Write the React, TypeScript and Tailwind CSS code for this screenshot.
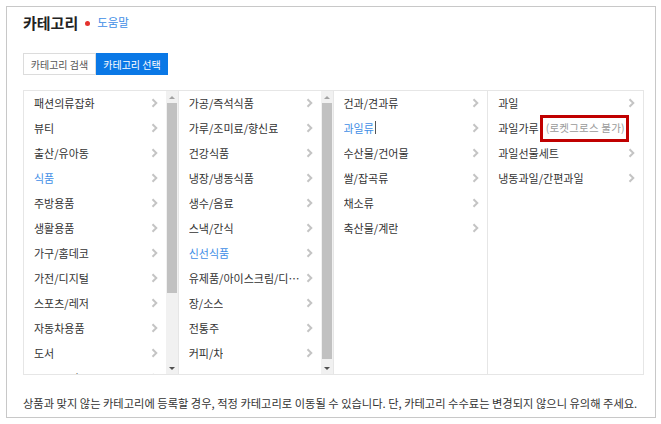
import React from 'react';

const font = { fontFamily: '"Noto Sans CJK KR", "Noto Sans", sans-serif' };

interface Item {
  label: string;
  active?: boolean;
  note?: string;
  cursor?: boolean;
}

const col1: Item[] = [
  { label: '패션의류잡화' },
  { label: '뷰티' },
  { label: '출산/유아동' },
  { label: '식품', active: true },
  { label: '주방용품' },
  { label: '생활용품' },
  { label: '가구/홈데코' },
  { label: '가전/디지털' },
  { label: '스포츠/레저' },
  { label: '자동차용품' },
  { label: '도서' },
  { label: '문구/오피스' },
];

const col2: Item[] = [
  { label: '가공/즉석식품' },
  { label: '가루/조미료/향신료' },
  { label: '건강식품' },
  { label: '냉장/냉동식품' },
  { label: '생수/음료' },
  { label: '스낵/간식' },
  { label: '신선식품', active: true },
  { label: '유제품/아이스크림/디저트' },
  { label: '장/소스' },
  { label: '전통주' },
  { label: '커피/차' },
];

const col3: Item[] = [
  { label: '건과/견과류' },
  { label: '과일류', active: true, cursor: true },
  { label: '수산물/건어물' },
  { label: '쌀/잡곡류' },
  { label: '채소류' },
  { label: '축산물/계란' },
];

const col4: Item[] = [
  { label: '과일' },
  { label: '과일가루', note: '(로켓그로스 불가)' },
  { label: '과일선물세트' },
  { label: '냉동과일/간편과일' },
];

function Chevron(): React.ReactElement {
  return (
    <svg width="7" height="10" viewBox="0 0 7 10" className="shrink-0">
      <polyline points="1.5,1.2 5.3,5 1.5,8.8" fill="none" stroke="#c4c4c4" strokeWidth="2" />
    </svg>
  );
}

function Row({ item }: { item: Item }): React.ReactElement {
  return (
    <div className="flex h-[25px] shrink-0 items-center justify-between pl-[10px] pr-[8px]">
      <span
        className={`flex min-w-0 items-center text-[11px] leading-[14px] ${item.active ? 'text-[#3f8ee6]' : 'text-[#333333]'}`}
      >
        <span className="truncate">{item.label}</span>
        {item.cursor && <span className="ml-[1px] h-[13px] w-[1px] bg-[#555]" />}
        {item.note && (
          <span className="relative ml-[7px] whitespace-nowrap text-[10.5px] tracking-[0.2px] text-[#9a9a9a]">
            {item.note}
            <span className="absolute -bottom-[7px] -left-[6px] -right-[4px] -top-[6px] border-[3px] border-[#c00000]" />
          </span>
        )}
      </span>
      {!item.note && <Chevron />}
    </div>
  );
}

function ScrollBar({ thumb }: { thumb: number }): React.ReactElement {
  return (
    <div className="flex w-[12px] shrink-0 flex-col bg-[#f1f1f1]">
      <div className="flex h-[12px] items-center justify-center">
        <div className="h-0 w-0 border-x-[3px] border-b-[3px] border-x-transparent border-b-[#a3a3a3]" />
      </div>
      <div className="flex-1 px-[1px]">
        <div className="w-full bg-[#c1c1c1]" style={{ height: thumb }} />
      </div>
      <div className="flex h-[12px] items-center justify-center">
        <div className="h-0 w-0 border-x-[3px] border-t-[3px] border-x-transparent border-t-[#505050]" />
      </div>
    </div>
  );
}

function Column({ items, thumb, last }: { items: Item[]; thumb?: number; last?: boolean }): React.ReactElement {
  return (
    <div className={`flex min-w-0 overflow-hidden ${last ? '' : 'border-r border-[#e6e6e6]'}`}>
      <div className="-mt-[1px] flex min-w-0 flex-1 flex-col overflow-hidden">
        {items.map((it) => (
          <Row key={it.label} item={it} />
        ))}
      </div>
      {thumb !== undefined && <ScrollBar thumb={thumb} />}
    </div>
  );
}

export default function App(): React.ReactElement {
  return (
    <div className="h-[424px] w-[661px] bg-white p-[6px]" style={font}>
      <div className="flex h-[412px] w-[650px] flex-col border border-[#c8c8c8] px-[16px] pt-[6px]">
        <div className="flex h-[20px] items-center">
          <h1 className="text-[15px] font-bold leading-[20px] text-[#222]">카테고리</h1>
          <span className="ml-[7px] h-[5px] w-[5px] rounded-full bg-[#e5322d]" />
          <span className="ml-[7px] text-[11.5px] text-[#3f8ee6]">도움말</span>
        </div>

        <div className="mt-[20px] flex h-[22px]">
          <div className="flex w-[73px] items-center justify-center border border-[#dcdcdc] text-[10px] text-[#555]">
            카테고리 검색
          </div>
          <div className="flex w-[72px] items-center justify-center bg-[#0a78e6] text-[10px] text-white">
            카테고리 선택
          </div>
        </div>

        <div className="mt-[15px] grid h-[285px] w-[621px] grid-cols-4 border border-[#e6e6e6]">
          <Column items={col1} thumb={190} />
          <Column items={col2} thumb={256} />
          <Column items={col3} />
          <Column items={col4} last />
        </div>

        <p className="mt-[21px] whitespace-nowrap text-[11.25px] leading-[14px] text-[#333]">
          상품과 맞지 않는 카테고리에 등록할 경우, 적정 카테고리로 이동될 수 있습니다. 단, 카테고리 수수료는 변경되지 않으니 유의해 주세요.
        </p>
      </div>
    </div>
  );
}
